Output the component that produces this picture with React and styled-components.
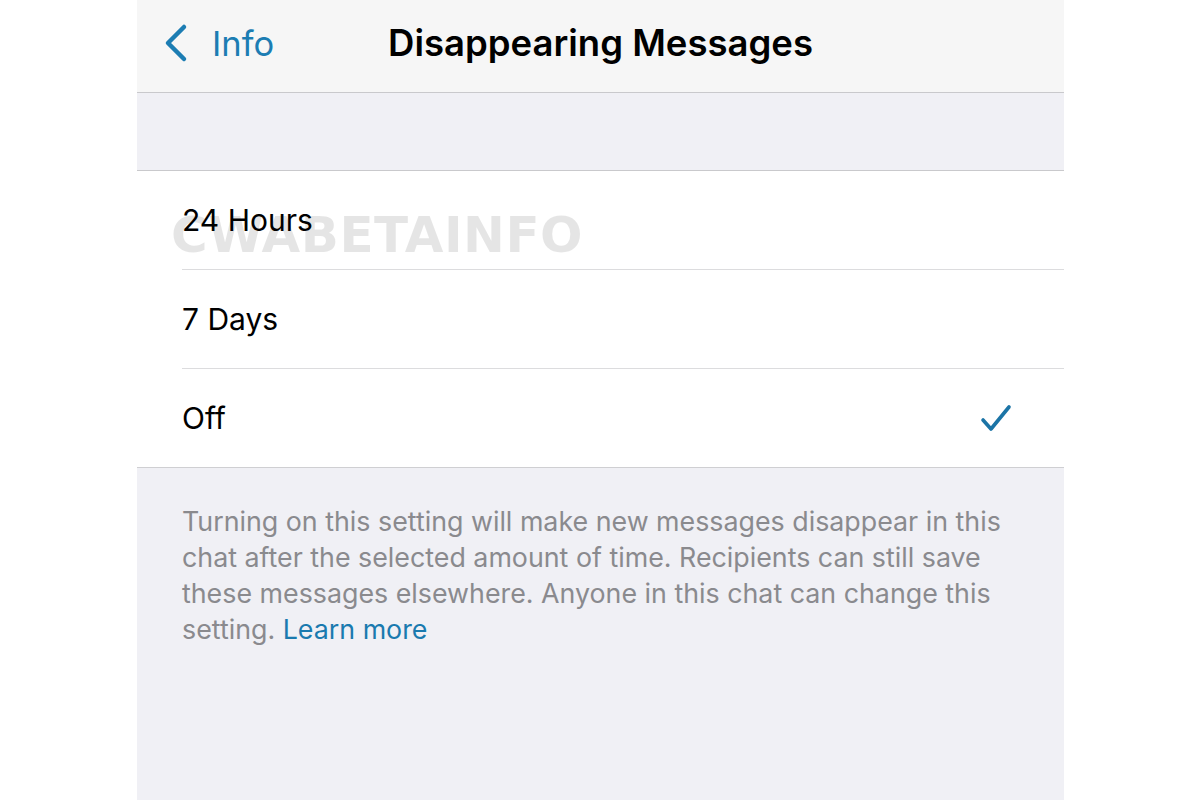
import React from 'react';
import styled, { createGlobalStyle } from 'styled-components';

const GlobalStyle = createGlobalStyle`
  html, body {
    margin: 0;
    padding: 0;
    background: #fff;
  }
  body {
    font-family: Inter, "Noto Sans", "Liberation Sans", sans-serif;
    -webkit-font-smoothing: antialiased;
  }
`;

const Page = styled.div`
  width: 1200px;
  height: 800px;
  display: flex;
  justify-content: center;
  background: #fff;
  overflow: hidden;
`;

const Screen = styled.div`
  width: 927px;
  margin-left: 1px;
  height: 800px;
  display: flex;
  flex-direction: column;
  background: #f0f0f5;
`;

const NavBar = styled.header`
  height: 92px;
  flex-shrink: 0;
  display: grid;
  grid-template-columns: 1fr auto 1fr;
  align-items: center;
  background: #f6f6f6;
  border-bottom: 1px solid #c9c9cc;
`;

const BackButton = styled.div`
  display: flex;
  align-items: center;
  gap: 23px;
  padding-left: 26px;
  color: #1c7db3;
  font-size: 34.5px;
  font-weight: 400;
  margin-top: -6px;
`;

const Title = styled.h1`
  margin: -6px 0 0 0;
  font-size: 36.5px;
  font-weight: 600;
  color: #000;
  letter-spacing: 0;
`;

const Spacer = styled.div`
  height: 77px;
  flex-shrink: 0;
  border-bottom: 1px solid #c9c9cc;
`;

const List = styled.div`
  position: relative;
  background: #fff;
  border-bottom: 1px solid #cfcfd2;
`;

const Row = styled.div`
  height: 98px;
  margin-left: 45px;
  padding-right: 52px;
  display: flex;
  align-items: center;
  justify-content: space-between;
  font-size: 30px;
  color: #000;
  border-bottom: ${p => (p.$last ? 'none' : '1px solid #dcdcde')};
  position: relative;
  z-index: 1;
`;

const Watermark = styled.div`
  position: absolute;
  left: 34px;
  top: 35px;
  font-family: "DejaVu Sans", sans-serif;
  font-size: 50px;
  font-weight: 900;
  letter-spacing: 0.5px;
  color: rgba(0, 0, 0, 0.1);
  user-select: none;
`;

const Footer = styled.p`
  margin: 0;
  padding: 35px 50px 0 45px;
  font-size: 26.8px;
  line-height: 36px;
  color: #8a8a8e;
`;

const LearnMore = styled.span`
  color: #1a7aaf;
`;

const ChevronLeft = () => (
  <svg width="26" height="40" viewBox="0 0 26 40">
    <path d="M21 4 L5 20 L21 36" fill="none" stroke="#1c7db3" strokeWidth="4.5" strokeLinecap="round" strokeLinejoin="round" />
  </svg>
);

const Check = () => (
  <svg width="32" height="30" viewBox="0 0 32 30">
    <path d="M3 17 L11 26 L29 4" fill="none" stroke="#1b74a6" strokeWidth="3.6" strokeLinecap="round" strokeLinejoin="round" />
  </svg>
);

const options = [
  { label: '24 Hours', selected: false },
  { label: '7 Days', selected: false },
  { label: 'Off', selected: true },
];

export default function App() {
  return (
    <Page>
      <GlobalStyle />
      <Screen>
        <NavBar>
          <BackButton>
            <ChevronLeft />
            <span>Info</span>
          </BackButton>
          <Title>Disappearing Messages</Title>
          <div />
        </NavBar>
        <Spacer />
        <List>
          <Watermark>CWABETAINFO</Watermark>
          {options.map((o, i) => (
            <Row key={o.label} $last={i === options.length - 1}>
              <span>{o.label}</span>
              {o.selected && <Check />}
            </Row>
          ))}
        </List>
        <Footer>
          Turning on this setting will make new messages disappear in this chat after the selected amount of time. Recipients can still save these messages elsewhere. Anyone in this chat can change this setting. <LearnMore>Learn more</LearnMore>
        </Footer>
      </Screen>
    </Page>
  );
}
